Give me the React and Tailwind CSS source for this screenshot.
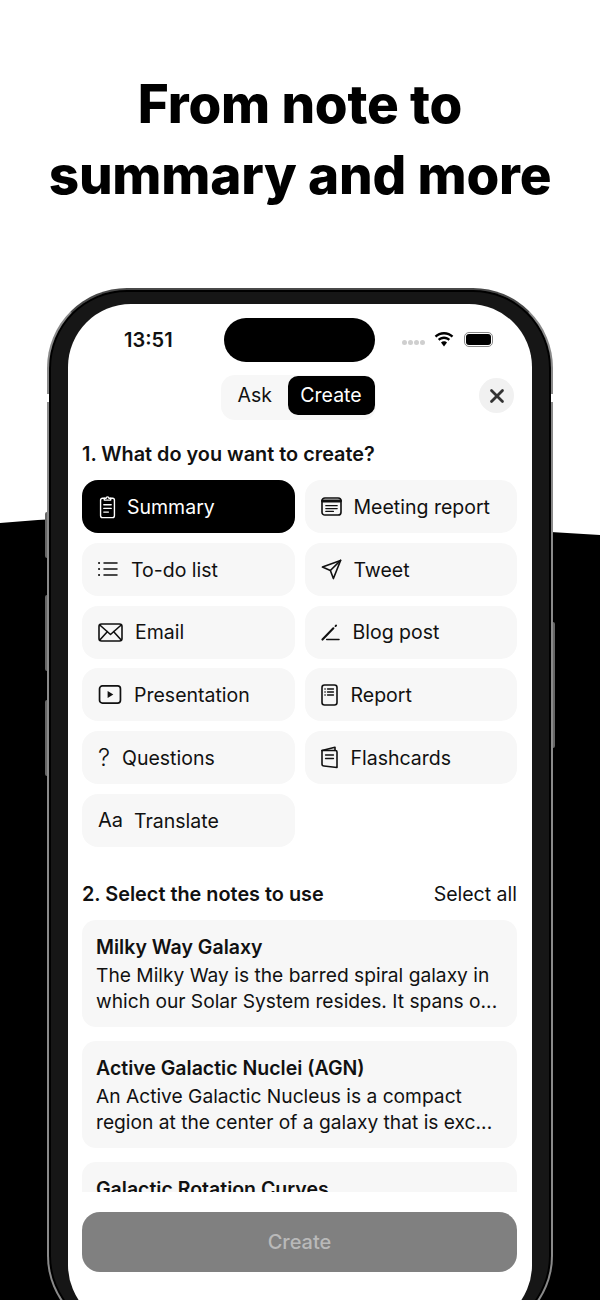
import React from 'react';
import { X } from 'lucide-react';

function IconSummary({ className }) {
  return (
    <svg viewBox="0 0 18 26" className={className} fill="none" stroke="currentColor" strokeWidth="1.5" strokeLinecap="round" strokeLinejoin="round">
      <path d="M5.5 3.5H3.500a2 2 0 0 0-2 2v17a2 2 0 0 0 2 2h11a2 2 0 0 0 2-2v-17a2 2 0 0 0-2-2h-2" />
      <path d="M5.500 5.500v-2h2a1.500 1.500 0 0 1 3 0h2v2z" />
      <path d="M5 10.500h8M5 14.500h8M5 18.500h5" />
    </svg>
  );
}

function IconMeeting({ className }) {
  return (
    <svg viewBox="0 0 22 20" className={className} fill="none" stroke="currentColor" strokeWidth="1.7" strokeLinecap="round">
      <rect x="1" y="1" width="20" height="18" rx="3" />
      <path d="M1.500 4.200h19" strokeWidth="3" />
      <path d="M5 9.200h12M5 12.200h12M5 15.200h8" strokeWidth="1.300" />
    </svg>
  );
}

function IconList({ className }) {
  return (
    <svg viewBox="0 0 20 16" className={className} fill="none" stroke="currentColor" strokeWidth="1.500" strokeLinecap="round">
      <path d="M6 2h13M6 8h13M6 14h13" />
      <path d="M1 2h.1M1 8h.1M1 14h.1" strokeWidth="2" />
    </svg>
  );
}

function IconPlane({ className }) {
  return (
    <svg viewBox="0 0 22 22" className={className} fill="none" stroke="currentColor" strokeWidth="1.700" strokeLinejoin="round" strokeLinecap="round">
      <path d="M1.500 8.500 20.500 1.500 13 20.500 9.800 12z" />
      <path d="M9.800 12 20.500 1.500" />
    </svg>
  );
}

function IconMail({ className }) {
  return (
    <svg viewBox="0 0 25 19" className={className} fill="none" stroke="currentColor" strokeWidth="1.600" strokeLinejoin="round" strokeLinecap="round">
      <rect x="1" y="1" width="23" height="17" rx="2.500" />
      <path d="M1.800 2 12.500 11.500 23.200 2" />
      <path d="M1.800 17 9.300 8.700M23.200 17 15.700 8.700" />
    </svg>
  );
}

function IconPen({ className }) {
  return (
    <svg viewBox="0 0 20 18" className={className} fill="none" stroke="currentColor" strokeWidth="1.600" strokeLinecap="round">
      <path d="M6 16.500h13" />
      <path d="M1.500 16.500 13 4.500" strokeWidth="2.200" />
      <path d="M15.300 2.200l.6-.6" strokeWidth="2" />
    </svg>
  );
}

function IconPlay({ className }) {
  return (
    <svg viewBox="0 0 24 20" className={className} fill="none" stroke="currentColor" strokeWidth="1.800">
      <rect x="1" y="1" width="22" height="18" rx="3" />
      <path d="M9.500 6.200v7.600l6-3.800z" fill="currentColor" stroke="none" />
    </svg>
  );
}

function IconReport({ className }) {
  return (
    <svg viewBox="0 0 17 22" className={className} fill="none" stroke="currentColor" strokeWidth="1.600" strokeLinecap="round">
      <rect x="1" y="1" width="15" height="20" rx="2.500" />
      <path d="M6.500 5h6M6.500 8h6M6.500 11h6" strokeWidth="1.300" />
      <path d="M4 5h.1M4 8h.1M4 11h.1" strokeWidth="1.600" />
    </svg>
  );
}

function IconCards({ className }) {
  return (
    <svg viewBox="0 0 17 23" className={className} fill="none" stroke="currentColor" strokeWidth="1.600" strokeLinecap="round" strokeLinejoin="round">
      <path d="M1 4.500 14 1.200v3.300" />
      <path d="M1 4.500h13.500a1.500 1.500 0 0 1 1.500 1.500v15.500L3 20a2 2 0 0 1-2-2z" />
      <path d="M4.500 9h8M4.500 12.500h8" strokeWidth="1.300" />
    </svg>
  );
}

const kinds = [
  { label: 'Summary', active: true, slot: 'w-[29px]', icon: <IconSummary className="ml-[1px] h-[24px] w-[17px]" /> },
  { label: 'Meeting report', slot: 'w-[33px]', icon: <IconMeeting className="h-[19px] w-[21px]" /> },
  { label: 'To-do list', slot: 'w-[33px]', icon: <IconList className="h-[16px] w-[20px]" /> },
  { label: 'Tweet', slot: 'w-[33px]', icon: <IconPlane className="h-[21px] w-[21px]" /> },
  { label: 'Email', slot: 'w-[37px]', icon: <IconMail className="h-[19px] w-[25px]" /> },
  { label: 'Blog post', slot: 'w-[32px]', icon: <IconPen className="h-[17px] w-[19px]" /> },
  { label: 'Presentation', slot: 'w-[36px]', icon: <IconPlay className="h-[19px] w-[24px]" /> },
  { label: 'Report', slot: 'w-[30px]', icon: <IconReport className="h-[22px] w-[17px]" /> },
  { label: 'Questions', slot: 'w-[24px]', icon: <span className="text-[24px] font-light leading-none">?</span> },
  { label: 'Flashcards', slot: 'w-[30px]', icon: <IconCards className="h-[23px] w-[17px]" /> },
  { label: 'Translate', slot: 'w-[36px]', icon: <span className="text-[20px] leading-none">Aa</span> },
];

const notes = [
  { title: 'Milky Way Galaxy', body: ['The Milky Way is the barred spiral galaxy in', 'which our Solar System resides. It spans o...'] },
  { title: 'Active Galactic Nuclei (AGN)', body: ['An Active Galactic Nucleus is a compact', 'region at the center of a galaxy that is exc...'] },
  { title: 'Galactic Rotation Curves', body: [] },
];

export default function App() {
  return (
    <div className="relative h-[1300px] w-[600px] overflow-hidden bg-white font-['Inter',sans-serif]">
      {/* black backdrop behind the phone */}
      <svg className="absolute left-0 top-0 h-[1300px] w-[600px]" viewBox="0 0 600 1300">
        <path d="M0 523 Q150 510 300 518 T600 535 V1300 H0 Z" fill="#000" />
      </svg>

      <h1 className="relative flex h-[288px] flex-col items-center pt-[69px] text-[53px] font-extrabold leading-[71px] tracking-[-0.2px] text-black">
        <span>From note to</span>
        <span>summary and more</span>
      </h1>

      {/* phone */}
      <div className="relative mx-[47px] h-[1048px] rounded-[80px] border-2 border-[#8a8a8a] border-t-[#4a4a4a] bg-[#161616] px-[19px] pt-[14px] shadow-[inset_0_0_0_2px_#000]">
        {/* side buttons */}
        <i className="absolute left-[-4px] top-[222px] h-[46px] w-[2px] rounded-l bg-[#666]" />
        <i className="absolute left-[-4px] top-[305px] h-[76px] w-[2px] rounded-l bg-[#666]" />
        <i className="absolute left-[-4px] top-[410px] h-[76px] w-[2px] rounded-l bg-[#666]" />
        <i className="absolute right-[-4px] top-[332px] h-[126px] w-[2px] rounded-r bg-[#666]" />
        {/* antenna marks */}
        <i className="absolute left-[-2px] top-[104px] h-[8px] w-[2px] bg-white" />
        <i className="absolute right-[-2px] top-[104px] h-[8px] w-[2px] bg-white" />

        <div className="h-[1024px] rounded-[63px] bg-white pl-[14px] pr-[15px]">
          <div className="flex h-[71px] items-center pl-[42px]">
            <span className="w-[50px] text-[20px] font-semibold text-[#111]">13:51</span>
            <div className="ml-[50px] h-[44px] w-[151px] rounded-full bg-black" />
            <div className="ml-[27px] flex items-center">
              <span className="mr-[9px] mt-[6px] flex gap-[1px]">
                <i className="h-[5px] w-[5px] rounded-full bg-[#cfcfcf]" />
                <i className="h-[5px] w-[5px] rounded-full bg-[#cfcfcf]" />
                <i className="h-[5px] w-[5px] rounded-full bg-[#cfcfcf]" />
                <i className="h-[5px] w-[5px] rounded-full bg-[#cfcfcf]" />
              </span>
              <svg viewBox="0 0 20 15" className="h-[15px] w-[20px]" fill="#000">
                <path d="M10 2.400c3 0 5.700 1.200 7.700 3.100l1.600-1.700C16.900 1.500 13.600 0 10 0S3.100 1.500.7 3.800l1.600 1.700C4.300 3.600 7 2.400 10 2.400z" />
                <path d="M10 7c1.700 0 3.300.7 4.500 1.800l1.600-1.700C14.500 5.500 12.400 4.600 10 4.600s-4.500.9-6.100 2.500l1.600 1.700C6.700 7.700 8.300 7 10 7z" />
                <path d="M10 9.300c-1.200 0-2.200.5-3 1.200l3 4 3-4c-.8-.7-1.800-1.200-3-1.200z" />
              </svg>
              <span className="ml-[10px] flex h-[15px] w-[29px] items-center rounded-[5px] border border-[#888] p-[1px]">
                <span className="h-full w-full rounded-[3px] bg-black" />
              </span>
            </div>
          </div>

          <div className="relative flex justify-center pr-[3px]">
            <div className="flex h-[45px] w-[155px] items-start rounded-[14px] bg-[#f7f7f7] pl-[17px] pt-[1px] text-[19.5px] text-[#111]">
              <span className="flex h-[39px] w-[50px] items-center">Ask</span>
              <span className="flex h-[39px] w-[87px] items-center justify-center rounded-[10px] bg-black text-white">Create</span>
            </div>
            <button className="absolute right-[3px] top-[3px] flex h-[35px] w-[35px] items-center justify-center rounded-full bg-[#f1f1f1] text-[#333]">
              <X className="h-[22px] w-[22px]" strokeWidth={3} />
            </button>
          </div>

          <h2 className="mt-[21px] text-[19.85px] font-semibold leading-[26px] text-[#111]">1. What do you want to create?</h2>

          <div className="mt-[13px] grid grid-cols-2 gap-x-[10px] gap-y-[9.8px]">
            {kinds.map((k) => (
              <div
                key={k.label}
                className={`flex h-[53px] items-center rounded-[16px] pl-[16px] text-[19.5px] ${k.active ? 'bg-black text-white' : 'bg-[#f7f7f7] text-[#111]'}`}
              >
                <span className={`flex shrink-0 items-center ${k.slot}`}>{k.icon}</span>
                <span className="mt-[2px]">{k.label}</span>
              </div>
            ))}
          </div>

          <div className="mt-[34px] flex items-center justify-between leading-[26px] text-[#111]">
            <h2 className="text-[19.85px] font-semibold">2. Select the notes to use</h2>
            <span className="text-[19.5px]">Select all</span>
          </div>

          <div className="mt-[13px] flex h-[272px] flex-col gap-[14px] overflow-hidden">
            {notes.map((n) => (
              <div key={n.title} className="h-[107px] shrink-0 whitespace-nowrap rounded-[14px] bg-[#f7f7f7] pl-[14px] pr-[15px] pt-[14px] text-[#111]">
                <p className="text-[19.5px] font-semibold leading-[27px]">{n.title}</p>
                <div className="mt-[1px]">
                  {n.body.map((line) => (
                    <p key={line} className="text-[19.2px] leading-[26.500px]">{line}</p>
                  ))}
                </div>
              </div>
            ))}
          </div>

          <button className="mt-[20px] flex h-[60px] w-full items-center justify-center rounded-[18px] bg-[#808080] text-[20px] font-medium text-[#b9b9b9]">
            Create
          </button>
        </div>
      </div>
    </div>
  );
}
